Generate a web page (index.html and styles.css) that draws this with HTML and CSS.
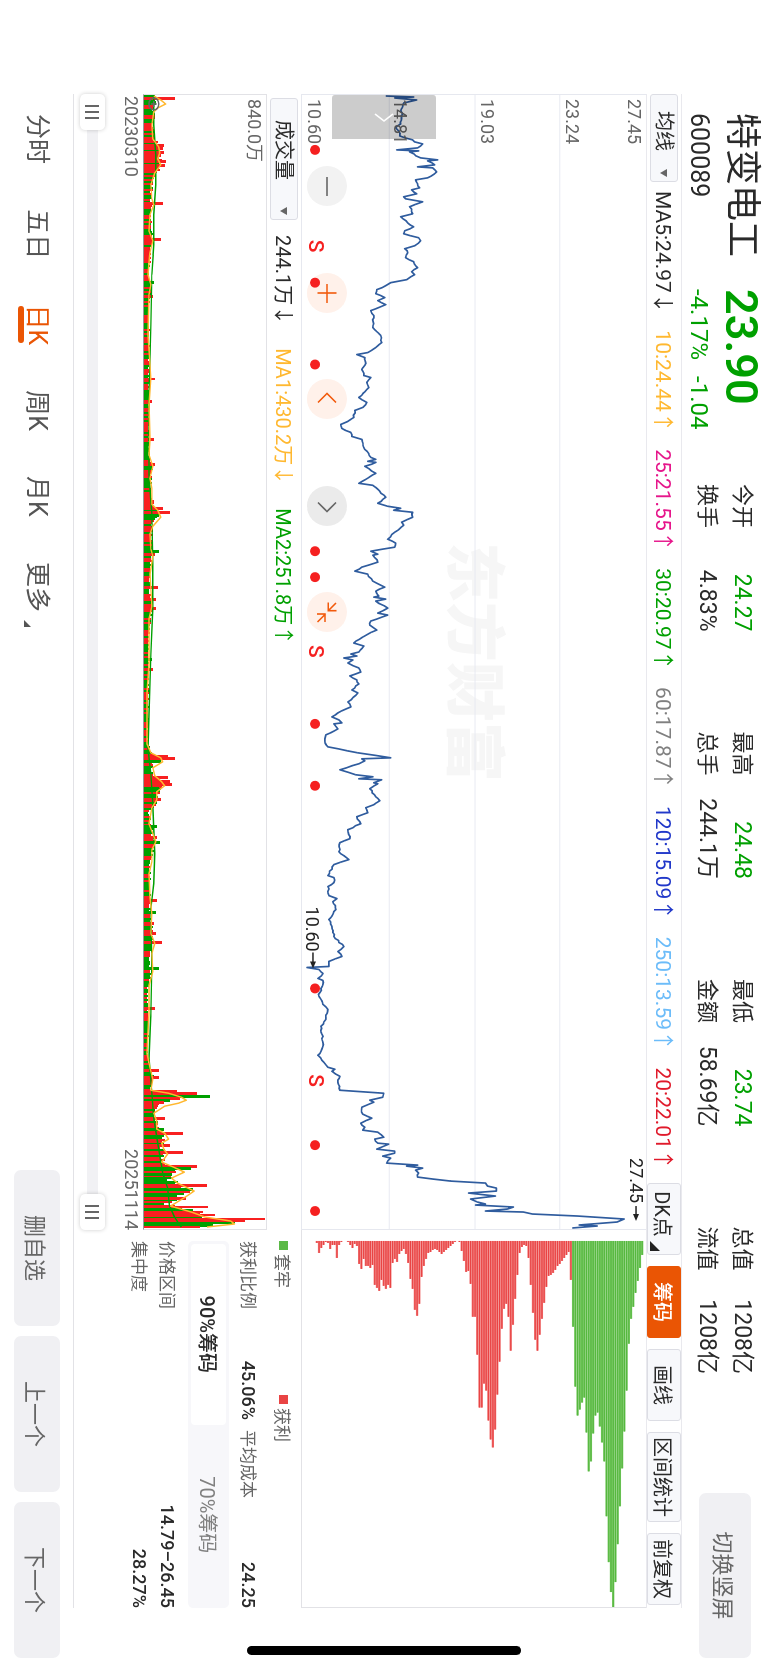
FILE: index.html
```html
<!DOCTYPE html>
<html lang="zh-CN">
<head>
<title>特变电工 600089</title>
<meta charset="utf-8">
<meta name="viewport" content="width=device-width, initial-scale=1.0" />
<meta name="format-detection" content="telephone=no">
<link rel="stylesheet" href="styles.css">
</head>
<body>
<div class="screen">

  <!--quote header starts here-->
  <header class="quote">
    <div class="stock">
      <h1 class="name">特变电工</h1>
      <div class="price">23.90</div>
      <div class="code">600089</div>
      <div class="change"><span>-4.17%</span><span>-1.04</span></div>
    </div>
    <dl class="stats">
      <div><dt>今开</dt><dd class="down">24.27</dd></div>
      <div><dt>最高</dt><dd class="down">24.48</dd></div>
      <div><dt>最低</dt><dd class="down">23.74</dd></div>
      <div><dt>总值</dt><dd>1208亿</dd></div>
      <div><dt>换手</dt><dd>4.83%</dd></div>
      <div><dt>总手</dt><dd>244.1万</dd></div>
      <div><dt>金额</dt><dd>58.69亿</dd></div>
      <div><dt>流值</dt><dd>1208亿</dd></div>
    </dl>
    <button type="button" class="btn rotate">切换竖屏</button>
  </header>
  <!--quote header ends here-->

  <div class="toolbar">
    <div class="picker picker-ma">
      <select aria-label="主图指标"><option>均线</option></select>
    </div>
    <div class="ma-list">
      <span class="ma5">MA5:24.97<i>↓</i></span>
      <span class="ma10">10:24.44<i>↑</i></span>
      <span class="ma25">25:21.55<i>↑</i></span>
      <span class="ma30">30:20.97<i>↑</i></span>
      <span class="ma60">60:17.87<i>↑</i></span>
      <span class="ma120">120:15.09<i>↑</i></span>
      <span class="ma250">250:13.59<i>↑</i></span>
      <span class="ma20">20:22.01<i>↑</i></span>
    </div>
    <div class="tools">
      <button type="button" class="tool corner">DK点</button>
      <button type="button" class="tool active">筹码</button>
      <button type="button" class="tool">画线</button>
      <button type="button" class="tool">区间统计</button>
      <button type="button" class="tool">前复权</button>
    </div>
  </div>

  <main class="main">
    <section class="charts">
      <div class="price-plot">
        <svg viewBox="0 0 1136 345" preserveAspectRatio="none">
          <text class="watermark" x="448" y="194">东方财富</text>
          <path class="grid" d="M0 86.500H1136M0 171.500H1136M0 257.500H1136" />
          <polyline id="priceLine" class="price-line" points="" />
          <g class="axis">
            <text x="4" y="18">27.45</text>
            <text x="4" y="80">23.24</text>
            <text x="4" y="165">19.03</text>
            <text x="4" y="253">14.81</text>
            <text x="4" y="339">10.60</text>
          </g>
          <g class="mark">
            <text x="813" y="341">10.60</text>
            <path d="M859 334h10" /><path class="head" d="M868 331l7 3-7 3z" />
            <text x="1065" y="16">27.45</text>
            <path d="M1113 10h10" /><path class="head" d="M1121 7l7 3-7 3z" />
          </g>
        </svg>
        <button type="button" class="drawer" aria-label="展开">
          <svg viewBox="0 0 44 104"><path d="M19 43l7 9-7 9" /></svg>
        </button>
        <div class="controls">
          <button type="button" class="gray" aria-label="缩小"><svg viewBox="0 0 40 40"><path d="M11 20h19" /></svg></button>
          <button type="button" aria-label="放大"><svg viewBox="0 0 40 40"><path d="M11 20h19M20 10.500v19" /></svg></button>
          <button type="button" aria-label="左移"><svg viewBox="0 0 40 40"><path d="M23.500 11l-9 9 9 9" /></svg></button>
          <button type="button" class="gray dark" aria-label="右移"><svg viewBox="0 0 40 40"><path d="M16.500 11l9 9-9 9" /></svg></button>
          <button type="button" aria-label="收起"><svg viewBox="0 0 40 40"><path d="M11 11l7.500 7.500M10.500 18.700h8.200v-8.200M30 29.500l-8-8M30 22h-8v8" /></svg></button>
        </div>
        <svg class="events" viewBox="0 0 1136 345" preserveAspectRatio="none">
          <g id="dots"></g>
          <text x="145" y="338">S</text>
          <text x="551" y="338">S</text>
          <text x="981" y="338">S</text>
        </svg>
      </div>

      <div class="vol-head">
        <div class="picker picker-vol">
          <select aria-label="副图指标"><option>成交量</option></select>
        </div>
        <span class="ma5">244.1万<i>↓</i></span>
        <span class="ma10">MA1:430.2万<i>↓</i></span>
        <span class="ma30">MA2:251.8万<i>↑</i></span>
      </div>
      <div class="vol-plot">
        <svg viewBox="0 0 1136 124" preserveAspectRatio="none">
          <g id="volBars" shape-rendering="crispEdges"></g>
          <polyline id="volMa2" class="vol-ma2" points="" />
          <polyline id="volMa1" class="vol-ma1" points="" />
          <g class="axis"><text x="4" y="18">840.0万</text></g>
          <path class="info" d="M3 114a6 5 0 1 0 12 0a6 5 0 1 0-12 0M6 114h6M9 111v6" />
        </svg>
      </div>
      <div class="dates"><span>20230310</span><span>20251114</span></div>
      <div class="range">
        <input type="range" min="0" max="100" value="0" aria-label="开始日期">
        <input type="range" min="0" max="100" value="100" aria-label="结束日期">
      </div>
    </section>

    <aside class="chips">
      <div class="chips-plot">
        <svg id="chipBars" viewBox="0 0 378 345" preserveAspectRatio="none"></svg>
      </div>
      <div class="legend"><span class="trapped">套牢</span><span class="profit">获利</span></div>
      <dl class="ratio">
        <div><dt>获利比例</dt><dd>45.06%</dd></div>
        <div><dt>平均成本</dt><dd>24.25</dd></div>
      </dl>
      <div class="segment">
        <button type="button" class="on">90%筹码</button>
        <button type="button">70%筹码</button>
      </div>
      <dl class="detail">
        <div><dt>价格区间</dt><dd>14.79–26.45</dd></div>
        <div><dt>集中度</dt><dd>28.27%</dd></div>
      </dl>
    </aside>
  </main>

  <footer class="footer">
    <nav class="tabs">
      <a href="#">分时</a>
      <a href="#">五日</a>
      <a href="#" class="current">日K</a>
      <a href="#">周K</a>
      <a href="#">月K</a>
      <a href="#" class="more">更多</a>
    </nav>
    <div class="actions">
      <button type="button" class="btn">删自选</button>
      <button type="button" class="btn">上一个</button>
      <button type="button" class="btn">下一个</button>
    </div>
  </footer>

  <div class="home-bar"></div>
</div>
<script type="text/javascript" src="charts.js"></script>
</body>
</html>
```

FILE: styles.css
```css
* { margin: 0; padding: 0; box-sizing: border-box; }
html, body { width: 100%; height: 100%; overflow: hidden; background: #fff; }
body, button, select { font-family: Roboto, "Noto Sans CJK SC", sans-serif; }
button { border: 0; background: none; cursor: pointer; }
svg { display: block; width: 100%; height: 100%; }
i { font-style: normal; }

/* landscape page turned onto a portrait window */
.screen { position: fixed; left: 0; top: 0; display: flex; flex-direction: column; width: 100vh; height: 100vw; color: #2a2a2a; line-height: 1; transform-origin: 0 0; transform: rotate(90deg) translateY(-100%); }

.btn { background: #f0f0f3; border-radius: 7px; color: #666; font-size: 22px; }

/* quote header */
.quote { flex: none; display: flex; height: 86px; padding: 0 11px 0 113px; }
.stock { display: grid; grid-template-columns: 176px 195px; grid-template-rows: 52px 33px; align-items: center; }
.name { font-size: 36px; font-weight: 400; line-height: 40px; }
.price { font-size: 45px; font-weight: 600; color: #00a000; }
.code { font-size: 25px; }
.change { display: flex; gap: 16px; font-size: 24px; color: #00a000; }
.stats { flex: 1; display: grid; grid-template-columns: repeat(4, 1fr); grid-template-rows: 35px 35px; column-gap: 100px; margin: 8px 119px 0 0; }
.stats div { display: flex; justify-content: space-between; align-items: center; white-space: nowrap; }
.stats dt { font-size: 22px; }
.stats dd { font-size: 23px; }
.stats .down { color: #00a000; }
.rotate { width: 165px; height: 52px; margin-top: 17px; }

/* indicator toolbar */
.toolbar { flex: none; display: flex; align-items: center; height: 36px; margin: 0 61px 0 94px; padding-right: 3px; border-top: 1px solid #e9e9ee; border-bottom: 1px solid #e9e9ee; }
.picker { position: relative; height: 28px; }
.picker select { width: 100%; height: 28px; appearance: none; border: 1px solid #dcdde4; border-radius: 3px; background: #f7f8fb; color: #2a2a2a; font-size: 20px; line-height: 26px; }
.picker:after { content: ""; position: absolute; right: 5px; top: 11px; border: 4px solid transparent; border-top: 7px solid #666; border-bottom: 0; pointer-events: none; }
.picker-ma { width: 88px; }
.picker-ma select { padding-left: 16px; }
.picker-vol { width: 122px; }
.picker-vol select { padding-left: 21px; }
.ma-list { flex: 1; display: flex; justify-content: space-between; margin: 0 13px 0 9px; font-size: 21px; white-space: nowrap; }
.ma-list i, .vol-head i { font-family: "Noto Sans CJK SC", sans-serif; }
.ma5 { color: #2a2a2a; }
.ma10 { color: #ffb830; }
.ma25 { color: #e6168b; }
.ma30 { color: #00a000; }
.ma60 { color: #808080; }
.ma120 { color: #2138c9; }
.ma250 { color: #6cbcf9; }
.ma20 { color: #e01a2b; }
.tools { display: flex; gap: 11px; }
.tool { position: relative; min-width: 72px; height: 34px; padding: 0 4px; border: 1px solid #dcdde4; border-radius: 3px; background: #f7f8fb; color: #2a2a2a; font-size: 20px; white-space: nowrap; }
.tool.active { border-color: #ea5504; background: #ea5504; color: #fff; font-weight: 500; }
.tool.corner { padding-right: 14px; }
.tool.corner:after { content: ""; position: absolute; right: 3px; bottom: 2px; border-left: 10px solid transparent; border-bottom: 10px solid #222; }

/* charts */
.main { flex: 1; display: flex; margin: 0 61px 0 94px; }
.charts { flex: 1; min-width: 0; }
.axis { font-size: 18px; fill: #666; }
.price-plot { position: relative; height: 345px; border: solid #e6e8ef; border-width: 0 1px 1px; }
.grid { stroke: #e8eaf2; stroke-width: 1; fill: none; }
.watermark { font-size: 60px; font-weight: 900; fill: #f6f6f6; }
.price-line { fill: none; stroke: #2f5c9e; stroke-width: 1.7; stroke-linejoin: round; }
.mark { font-size: 18px; fill: #222; stroke: none; }
.mark path { stroke: #222; stroke-width: 1.5; }
.mark .head { stroke: none; }
.drawer { position: absolute; left: 0; top: 210px; width: 44px; height: 104px; border-radius: 3px 0 0 3px; background: rgba(0, 0, 0, 0.2); }
.drawer path { fill: none; stroke: #fff; stroke-width: 1.5; }
.controls { position: absolute; left: 71px; top: 299px; width: 466px; display: flex; justify-content: space-between; }
.controls button { width: 40px; height: 40px; border-radius: 50%; background: #fff1ea; }
.controls path { fill: none; stroke: #f25a0c; stroke-width: 1.6; }
.controls .gray { background: #f2f2f2; }
.controls .dark { background: #ebebeb; }
.controls .gray path { stroke: #666; }
.events { position: absolute; left: 0; top: 0; pointer-events: none; fill: #f52020; font-size: 21px; font-weight: 500; }

.vol-head { display: flex; align-items: center; height: 34px; padding-left: 4px; font-size: 20px; white-space: nowrap; }
.vol-head .picker { margin-right: 15px; }
.vol-head span { margin-right: 23px; }
.vol-plot { height: 124px; border: 1px solid #e2e2e6; border-bottom-color: #999; }
.vol-ma1, .vol-ma2, .info { fill: none; stroke-width: 1.5; stroke-linejoin: round; }
.vol-ma1 { stroke: #ffb830; }
.vol-ma2 { stroke: #00a000; }
.info { stroke: #666; }
.dates { display: flex; justify-content: space-between; height: 24px; padding-left: 2px; line-height: 24px; font-size: 18px; color: #666; }

.range { position: relative; height: 25px; margin-top: 14px; }
.range:before { content: ""; position: absolute; left: 0; right: 0; top: 7px; height: 11px; background: #f1f1f4; }
.range input { position: absolute; left: 0; top: 0; width: 100%; height: 25px; appearance: none; background: transparent; pointer-events: none; }
.range input::-webkit-slider-thumb { appearance: none; width: 36px; height: 25px; border-radius: 5px; background: linear-gradient(#666, #666) 11px 6px / 2px 14px no-repeat, linear-gradient(#666, #666) 17px 6px / 2px 14px no-repeat, linear-gradient(#666, #666) 23px 6px / 2px 14px no-repeat, #fff; box-shadow: 0 0 4px rgba(0, 0, 0, 0.2); pointer-events: auto; }

/* chip distribution */
.chips { width: 378px; }
.chips-plot { height: 345px; border: solid #e2e2e6; border-width: 0 1px 1px 0; }
.trapped-bar { fill: #7cc968; }
.trapped-line { fill: #55b83e; }
.profit-bar { fill: #f07c7c; }
.profit-line { fill: #e94444; }
.legend, .ratio, .segment, .detail { margin-left: 11px; }
.legend { display: grid; grid-template-columns: 154px 1fr; align-items: center; height: 38px; font-size: 17px; color: #666; }
.legend span:before { content: ""; display: inline-block; width: 9px; height: 9px; margin-right: 4px; vertical-align: 3px; background: #5bb947; }
.legend .profit:before { background: #e94444; }
.ratio { display: grid; grid-template-columns: 179px 1fr; column-gap: 10px; height: 30px; }
.ratio div, .detail div { display: flex; justify-content: space-between; align-items: center; }
.detail div { height: 28px; }
.chips dt { font-size: 17px; color: #666; }
.chips dd { font-size: 18px; font-weight: 500; }
.segment { display: flex; height: 41px; margin-top: 4px; margin-bottom: 7px; padding: 3px; border-radius: 5px; background: #f7f7fa; }
.segment button { flex: 1; border-radius: 4px; color: #808080; font-size: 20px; }
.segment .on { background: #fff; color: #2a2a2a; font-weight: 500; }

/* bottom bar */
.footer { position: relative; flex: none; display: flex; justify-content: space-between; height: 74px; padding: 14px 11px 0 114px; }
.footer:before { content: ""; position: absolute; left: 94px; right: 61px; top: 0; height: 1px; background: #e2e2e6; }
.tabs { display: flex; justify-content: space-between; width: 498px; }
.tabs a { position: relative; padding-top: 11px; color: #555; font-size: 25px; line-height: 24px; text-decoration: none; }
.tabs .current { color: #ea5504; }
.tabs .current:after { content: ""; position: absolute; left: 2px; right: 2px; top: 36px; height: 6px; border-radius: 3px; background: #ea5504; }
.tabs .more:after { content: ""; position: absolute; right: -15px; top: 29px; border-left: 7px solid transparent; border-bottom: 7px solid #555; }
.actions { display: flex; gap: 10px; }
.actions .btn { width: 156px; height: 46px; }

.home-bar { position: absolute; right: 14px; top: 247px; bottom: 247px; width: 9px; border-radius: 5px; background: #000; }
```

FILE: charts.js
```js
// close price line, x y pairs
var price = '1,261 2,233 3,252 5,230 8,243 16,246 19,244 29,246 33,251 36,248 41,247 45,234 47,232 49,224 53,229 55,250 56,228 57,237 63,226 65,209 66,219 70,212 72,229 73,214 77,210 83,219 85,231 89,229 93,227 95,235 99,230 102,243 104,241 107,224 112,237 119,234 122,246 128,239 132,233 136,242 139,243 143,228 146,226 151,232 154,242 158,239 163,241 167,233 173,229 177,235 180,232 185,240 188,256 191,261 195,270 199,271 203,262 206,269 210,261 216,276 221,273 233,274 237,270 241,266 248,265 253,271 258,279 260,290 263,282 269,281 275,285 281,283 283,276 288,280 293,278 303,288 308,280 313,284 316,292 323,293 327,299 330,306 334,305 338,296 342,295 345,285 353,283 363,276 365,271 367,279 368,271 372,282 379,271 389,288 391,274 397,267 403,261 ' +
  '409,269 412,259 414,246 416,253 418,234 423,234 428,245 431,243 438,252 445,259 449,251 453,252 457,276 460,269 461,274 468,269 473,285 477,292 480,279 487,274 493,262 497,271 502,268 503,273 505,261 507,271 514,259 519,269 521,259 527,276 531,277 536,270 543,284 549,293 552,283 558,288 560,296 562,290 564,303 566,294 569,299 574,288 578,286 582,297 586,290 590,288 596,295 599,289 608,299 613,296 619,309 623,315 626,308 629,305 630,313 635,309 641,321 647,322 653,319 659,289 664,256 665,285 667,282 670,288 676,307 681,291 683,274 685,288 686,265 689,273 690,269 695,277 703,271 707,267 711,273 714,281 719,279 723,290 730,286 736,299 745,297 749,307 758,308 766,298 771,313 782,319 784,313 789,313 793,319 802,318 805,310 ' +
  '808,314 816,311 826,318 833,315 843,313 853,303 858,309 863,305 868,318 873,318 874,340 876,328 880,324 885,329 887,324 899,327 903,328 911,324 916,319 926,321 933,326 949,324 958,326 962,329 969,323 974,319 976,312 978,315 983,307 989,309 997,307 1000,263 1004,264 1007,277 1009,273 1014,285 1021,284 1025,275 1030,286 1034,282 1037,284 1039,269 1044,263 1046,272 1050,269 1051,258 1056,270 1058,252 1060,252 1063,264 1065,256 1070,260 1072,229 1073,240 1075,224 1077,231 1080,228 1084,229 1088,196 1090,161 1093,159 1095,150 1098,150 1100,178 1103,151 1106,176 1109,169 1111,161 1112,171 1114,133 1116,139 1118,161 1119,123 1121,114 1123,69 1126,22 1129,29 1132,67 1133,49 1135,74';
// small day to day noise between the pivots
var seed = 7;
function rand() {
  seed = (seed * 1103515245 + 12345) % 2147483648;
  return seed / 2147483648;
}
function jitter(str) {
  var p = str.split(' ').map(function (s) { return s.split(',').map(Number); });
  var out = [p[0].join(',')];
  for (var i = 1; i < p.length; i++) {
    var dx = p[i][0] - p[i - 1][0], dy = p[i][1] - p[i - 1][1];
    var n = Math.floor(dx / 2);
    for (var k = 1; k < n; k++) {
      out.push((p[i - 1][0] + dx * k / n).toFixed(1) + ',' + (p[i - 1][1] + dy * k / n + (rand() - 0.5) * 2).toFixed(1));
    }
    out.push(p[i].join(','));
  }
  return out.join(' ');
}
document.getElementById('priceLine').setAttribute('points', jitter(price));

var dots = [55, 188, 270, 457, 483, 630, 692, 895, 1052, 1118];
document.getElementById('dots').innerHTML = dots.map(function (x) {
  return '<circle cx="' + x + '" cy="332" r="5" />';
}).join('');

// volume: typical height at x, then the days that stand out
var level = [[0, 11], [20, 10], [44, 10], [50, 16], [72, 17], [80, 10], [100, 7], [140, 8], [155, 7], [180, 4], [190, 8], [210, 5], [360, 5], [372, 8], [400, 7], [420, 15], [428, 8], [500, 6], [515, 8], [540, 5], [650, 4], [660, 10], [675, 8], [690, 18], [710, 11], [716, 5], [735, 8], [752, 10], [770, 6], [810, 6], [850, 9], [860, 6], [880, 7], [895, 4], [965, 4], [980, 9], [996, 7], [1005, 22], [1012, 12], [1020, 10], [1030, 13], [1042, 20], [1068, 18], [1078, 32], [1086, 26], [1095, 48], [1104, 34], [1110, 24], [1116, 45], [1123, 65], [1128, 85], [1136, 58]];
var spikes = {
  3: 32, 50: 20, 53: 19, 57: 20, 66: 22, 70: 21, 108: 19, 144: 17, 187: -10, 201: 9, 284: 11, 307: 8, 345: 10, 370: 11,
  414: 19, 418: 26, 421: -15, 457: -15, 460: 11, 493: 14, 505: 12, 514: 12, 565: -8, 575: 9, 662: 24, 664: 32, 667: -17,
  683: 24, 687: 26, 690: 28, 694: -15, 705: 17, 732: -13, 743: 13, 748: -16, 752: 10, 806: 13, 818: -12, 829: 10, 839: 12,
  848: 18, 875: -15, 915: 11, 977: 15, 984: 15, 998: 34, 1000: 54, 1003: -67, 1005: 37, 1007: -26, 1009: 20, 1025: 21,
  1036: -20, 1040: 40, 1052: 26, 1059: 40, 1073: 54, 1075: -48, 1081: -28, 1092: 64, 1096: -50, 1105: 43, 1114: 65,
  1117: -50, 1119: 60, 1122: 72, 1126: 123, 1128: 103, 1130: -90, 1132: -70, 1134: 57
};
function levelAt(x) {
  for (var i = 1; i < level.length; i++) {
    if (x <= level[i][0]) {
      var a = level[i - 1], b = level[i];
      return a[1] + (b[1] - a[1]) * (x - a[0]) / (b[0] - a[0]);
    }
  }
  return 50;
}
function bar(x, w, h, up) {
  return '<rect x="' + x + '" y="' + (124 - h) + '" width="' + w + '" height="' + h + '" fill="' + (up ? '#f82020' : '#00a000') + '" />';
}
var html = '', up = true;
for (var x = 0; x < 1134; x += 2) {
  if (rand() > 0.5) { up = !up; }
  html += bar(x, 2, Math.round(levelAt(x) * (0.8 + rand() * 0.35)), up);
}
for (var s in spikes) {
  html += bar(s - 1, s > 1110 ? 2 : 3, Math.abs(spikes[s]), spikes[s] > 0);
}
document.getElementById('volBars').innerHTML = html;

// averages, x and height
function line(id, pts) {
  document.getElementById(id).setAttribute('points', pts.map(function (p) { return p[0] + ',' + (124 - p[1]); }).join(' '));
}
line('volMa1', [[1, 10], [5, 17], [9, 22], [13, 14], [17, 10], [30, 8], [44, 9], [52, 15], [58, 16], [64, 14], [70, 17], [78, 11], [90, 7], [104, 8], [110, 10], [120, 6], [136, 5], [146, 9], [158, 6], [180, 4], [190, 7], [200, 5], [240, 4], [284, 7], [310, 5], [345, 6], [360, 5], [372, 9], [384, 6], [394, 8], [410, 8], [416, 14], [423, 17], [432, 9], [440, 6], [455, 7], [462, 9], [480, 6], [495, 7], [512, 8], [525, 5], [570, 5], [600, 3], [650, 3], [659, 7], [664, 17], [668, 19], [674, 9], [682, 11], [688, 18], [692, 21], [698, 13], [706, 13], [714, 8], [730, 5], [740, 9], [748, 12], [756, 8], [768, 8], [780, 5], [804, 6], [820, 8], [840, 7], [850, 11], [860, 8], [878, 9], [892, 5], [920, 5], [960, 3], [974, 6], [986, 9], [997, 7], [1000, 25], [1004, 38], [1007, 43], [1010, 35], [1013, 21], [1020, 10], [1028, 13], [1036, 13], [1040, 21], [1046, 25], [1050, 18], [1056, 20], [1061, 24], [1069, 18], [1074, 30], [1079, 41], [1085, 28], [1090, 34], [1098, 51], [1104, 42], [1113, 27], [1119, 48], [1124, 62], [1128, 88], [1131, 92], [1134, 64]]);
line('volMa2', [[0, 10], [30, 10], [60, 12], [90, 12], [120, 10], [150, 10], [180, 8], [230, 7], [300, 5], [380, 5], [420, 8], [470, 9], [515, 9], [560, 7], [620, 5], [655, 4], [680, 7], [710, 9], [760, 11], [790, 10], [815, 7], [870, 8], [920, 7], [965, 5], [1000, 8], [1025, 10], [1050, 14], [1080, 19], [1095, 24], [1113, 26], [1124, 31], [1130, 35], [1134, 38]]);

// chip distribution, from the lowest price up
var chips = [2, 12, 7, 4, 1, 2, 8, 4, 4, 17, 4, 1, 0, 0, 1, 4, 7, 3, 5, 23, 28, 18, 25, 25, 27, 24, 44, 47, 50, 39, 45, 48, 44, 47, 22, 18, 21, 13, 10, 8, 13, 22, 38, 48, 69, 75, 63, 36, 25, 18, 12, 11, 9, 8, 9, 11, 13, 11, 9, 7, 5, 3, 1, 0, 1, 10, 20, 31, 30, 43, 76, 76, 114, 167, 167, 143, 150, 180, 199, 207, 189, 154, 121, 88, 68, 63, 76, 110, 84, 58, 34, 12, 6, 4, 5, 17, 44, 72, 99, 110, 94, 78, 62, 46, 35, 34, 32, 29, 25, 23, 20, 17, 14, 11, 39,
  86, 146, 175, 169, 162, 157, 192, 231, 221, 193, 175, 172, 186, 202, 221, 276, 322, 352, 367, 342, 304, 266, 228, 191, 150, 103, 78, 66, 52, 40, 27, 14];
document.getElementById('chipBars').innerHTML = chips.map(function (w, i) {
  var y = 329 - i * 2.235, kind = i < 115 ? 'profit' : 'trapped';
  return '<rect class="' + kind + '-bar" x="11" y="' + y + '" width="' + w + '" height="2.3" />' +
    '<rect class="' + kind + '-line" x="11" y="' + (y + 0.5) + '" width="' + w + '" height="1.2" />';
}).join('');
```
